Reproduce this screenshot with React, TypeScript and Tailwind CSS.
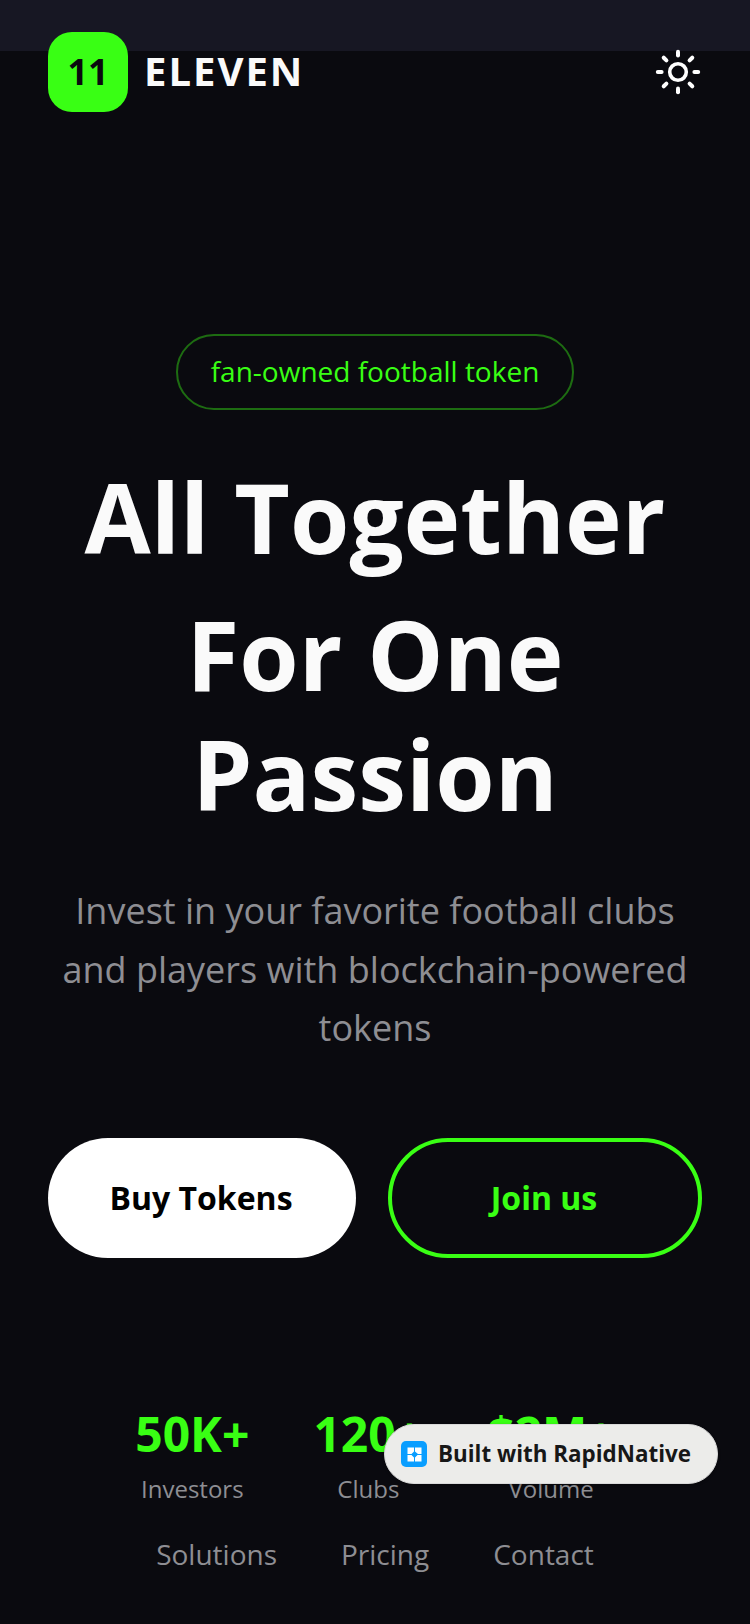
const STATS = [
  { value: '50K+', label: 'Investors' },
  { value: '120+', label: 'Clubs' },
  { value: '$2M+', label: 'Volume' },
]

const LINKS = ['Solutions', 'Pricing', 'Contact']

const RAYS = [0, 45, 90, 135, 180, 225, 270, 315]

export default function App() {
  return (
    <div className="relative flex h-[1624px] w-[750px] flex-col overflow-hidden bg-[#0a0a0f] font-['Open_Sans',sans-serif] text-[#fafafa]">
      {/* status bar */}
      <div className="h-[51px] shrink-0 bg-[#171723]" />

      {/* header */}
      <header className="-mt-[19px] flex items-center justify-between pl-[48px] pr-[48px]">
        <div className="flex items-center gap-[16px]">
          <div className="flex h-[80px] w-[80px] items-center justify-center rounded-[24px] bg-[#39ff14]">
            <span className="text-[36px] font-bold text-[#0a0a0f]">11</span>
          </div>
          <span className="-mt-[2px] text-[40px] font-bold leading-[54px] tracking-[2px]">ELEVEN</span>
        </div>
        <svg width="48" height="48" viewBox="0 0 48 48" fill="none" stroke="white" strokeWidth="3.6" strokeLinecap="round">
          <circle cx="24" cy="24" r="8.3" />
          {RAYS.map(a => (
            <line key={a} x1="24" y1="3.8" x2="24" y2="7.6" strokeWidth="4" transform={`rotate(${a} 24 24)`} />
          ))}
        </svg>
      </header>

      {/* hero */}
      <section className="mt-[222px] flex flex-col items-center px-[48px]">
        <div className="flex h-[76px] w-[398px] items-center justify-center rounded-full border-2 border-[#39ff14]/40">
          <span className="-mt-[3px] text-[28px] text-[#39ff14]">fan-owned football token</span>
        </div>
        <h1 className="mt-[47px] text-center text-[96px] font-bold leading-[120px]">All Together</h1>
        <h1 className="mt-[17px] w-[500px] text-center text-[96px] font-bold leading-[120px]">For One Passion</h1>
        <p className="mt-[48px] w-[640px] text-center text-[36px] leading-[58.5px] text-[#8e8e93]">
          Invest in your favorite football clubs and players with blockchain-powered tokens
        </p>
      </section>

      {/* buttons */}
      <div className="mt-[80px] flex gap-[32px] px-[48px]">
        <button className="flex h-[120px] w-[308px] items-center justify-center rounded-[60px] bg-white pr-[2px] text-[32px] font-bold text-black">
          Buy Tokens
        </button>
        <button className="flex h-[120px] w-[314px] items-center justify-center rounded-[60px] border-4 border-[#39ff14] pr-[2px] text-[32px] font-bold text-[#39ff14]">
          Join us
        </button>
      </div>

      {/* stats */}
      <div className="mt-[143px] flex justify-center gap-[64px]">
        {STATS.map(s => (
          <div key={s.label} className="flex flex-col items-center">
            <span className="text-[48px] font-bold leading-[65px] text-[#39ff14]">{s.value}</span>
            <span className="mt-[6px] text-[24px] leading-[33px] text-[#8e8e93]">{s.label}</span>
          </div>
        ))}
      </div>

      {/* footer links */}
      <nav className="mt-[30px] flex justify-center gap-[64px]">
        {LINKS.map(l => (
          <span key={l} className="text-[28px] leading-[38px] text-[#8e8e93]">{l}</span>
        ))}
      </nav>

      {/* badge */}
      <div className="absolute left-[384px] top-[1424px] flex h-[60px] w-[334px] items-center gap-[11px] rounded-full border border-[#d9d9d9] bg-[#ececea] pl-[16px] shadow-[0_1px_3px_rgba(0,0,0,0.3)]">
        <div className="flex h-[26px] w-[26px] items-center justify-center rounded-[5px] bg-[#0a9eff]">
          <svg width="17" height="17" viewBox="0 0 17 17" fill="white">
            <path d="M1.5 1.5h6.5v4L5.5 8H1.5zM9 1.5h6.500v6.500h-3.500L9 5.500zM1.500 9h4L8 11.500v4H1.500zM11.500 9h4v6.500H9v-4z" />
          </svg>
        </div>
        <span className="text-[22.4px] font-bold leading-[30px] text-[#171717]">Built with RapidNative</span>
      </div>
    </div>
  )
}
